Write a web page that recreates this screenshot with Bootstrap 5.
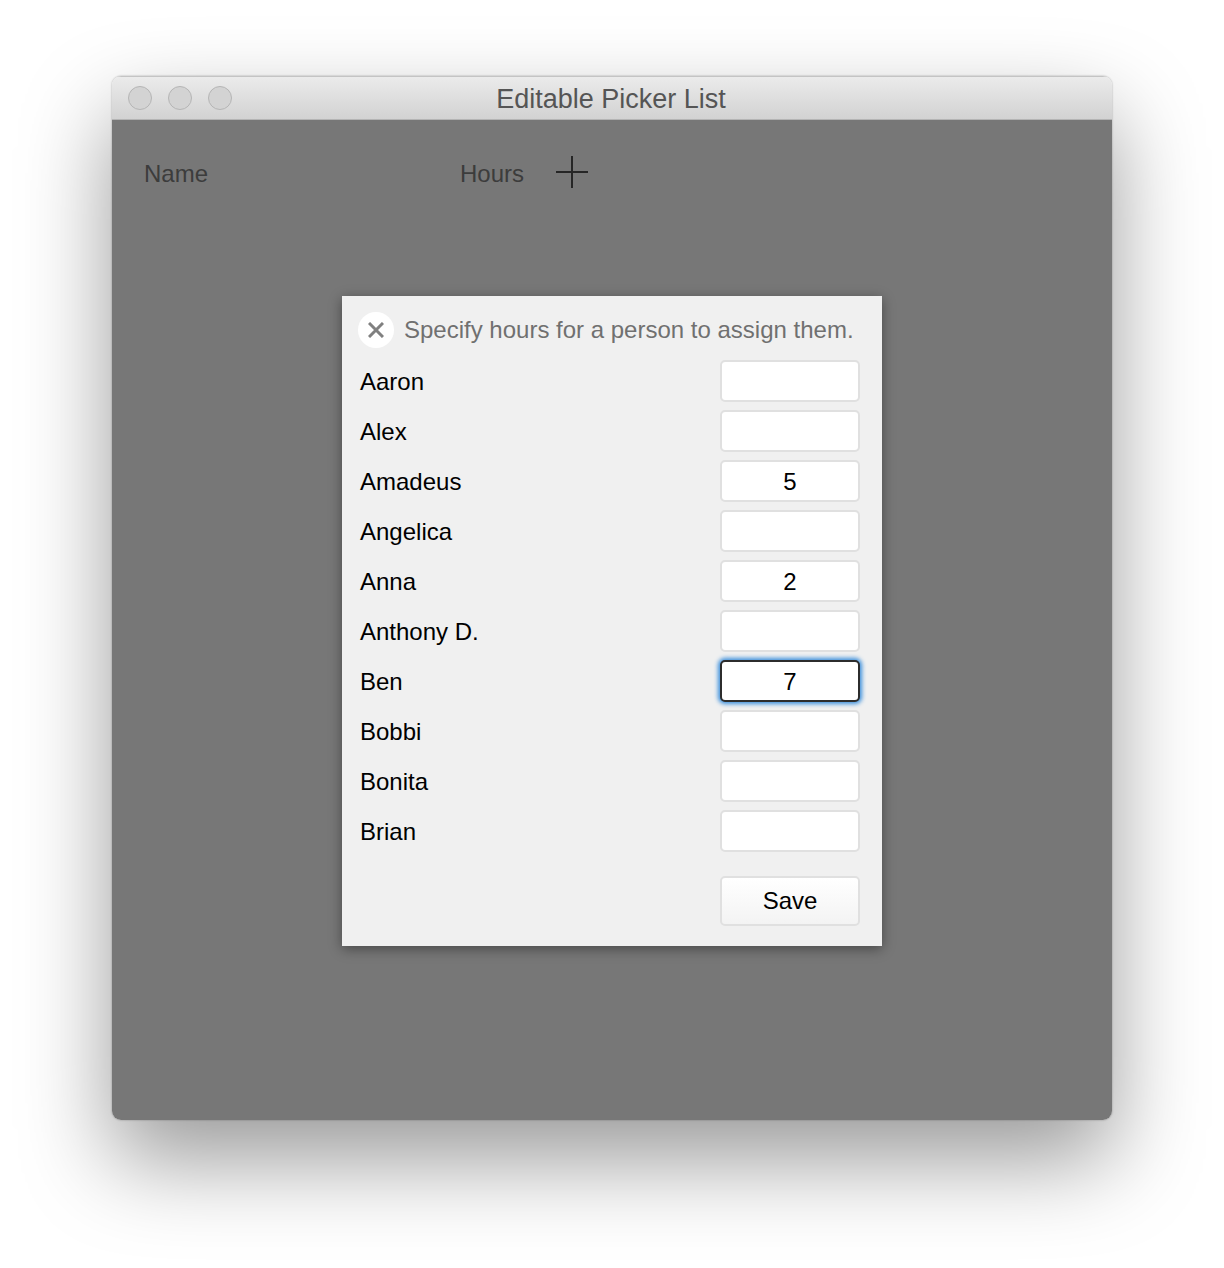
<!DOCTYPE html>
<html lang="en">
<head>
    <meta charset="UTF-8">
    <meta name="viewport" content="width=device-width, initial-scale=1.0">
    <title>Editable Picker List</title>
    <link href="https://cdn.jsdelivr.net/npm/bootstrap@5.3.0/dist/css/bootstrap.min.css" rel="stylesheet">
    <style>
        html, body {
            height: 100%;
        }
        body {
            background: #fff;
            font-family: "Liberation Sans", Arial, sans-serif;
            padding: 76px 112px 148px;
            overflow: hidden;
        }
        .mac-window {
            height: 1044px;
            border-radius: 9px;
            box-shadow: 0 0 2px rgba(0, 0, 0, .35), 0 40px 90px rgba(0, 0, 0, .4);
            overflow: hidden;
        }
        .mac-titlebar {
            height: 44px;
            padding: 0 16px;
            background: linear-gradient(#ebebeb, #d2d2d2);
            border-top: 1px solid #c4c4c4;
            border-bottom: 1px solid #b4b4b4;
            color: #555;
        }
        .mac-light {
            width: 24px;
            height: 24px;
            border-radius: 50%;
            background: #d3d3d3;
            border: 1px solid #b5b5b5;
        }
        .mac-lights {
            gap: 16px;
        }
        .mac-title {
            font-size: 27px;
            line-height: 44px;
            padding-right: 2px;
        }
        .mac-body {
            height: 1000px;
            background: #777;
        }
        .head-row {
            padding: 35px 32px 0;
            color: #3c3c3c;
            font-size: 24px;
            line-height: 34px;
        }
        .head-name {
            width: 316px;
        }
        .head-name, .head-hours {
            padding-top: 2px;
        }
        .head-plus {
            margin: 0 0 2px 32px;
        }
        .picker-dialog {
            top: 176px;
            left: 230px;
            width: 540px;
            height: 650px;
            background: #f0f0f0;
            padding: 9px 22px 0 18px;
            box-shadow: 0 3px 12px rgba(0, 0, 0, .4);
        }
        .picker-hint {
            height: 50px;
            margin: 0 0 1px -2px;
            color: #707070;
            font-size: 24px;
            gap: 10px;
        }
        .close-disc {
            width: 36px;
            height: 36px;
            background: #fff;
        }
        .picker-row {
            height: 50px;
            font-size: 24px;
            color: #000;
        }
        .picker-row span {
            padding-top: 2px;
        }
        .picker-row .form-control {
            width: 140px;
            height: 42px;
            padding: 2px 0 0;
            border: 2px solid #e0e0e0;
            border-radius: 5px;
            box-shadow: none;
            color: #000;
            font-size: 24px;
            text-align: center;
        }
        .picker-row .hours-active {
            border-color: #2c2c2c;
            box-shadow: 0 0 4px 2px #3b8fdc;
        }
        .save-btn {
            width: 140px;
            height: 50px;
            margin-top: 20px;
            padding: 0;
            border: 2px solid #e0e0e0;
            border-radius: 5px;
            background: linear-gradient(#fff, #f3f3f3);
            color: #000;
            font-size: 24px;
        }
    </style>
</head>
<body>

<div class="mac-window">
    <div class="mac-titlebar position-relative d-flex align-items-center">
        <div class="mac-lights d-flex">
            <span class="mac-light"></span>
            <span class="mac-light"></span>
            <span class="mac-light"></span>
        </div>
        <div class="mac-title position-absolute top-0 start-0 w-100 text-center">Editable Picker List</div>
    </div>

    <div class="mac-body position-relative">
        <!-- Header row -->
        <div class="head-row d-flex align-items-center">
            <div class="head-name">Name</div>
            <div class="head-hours">Hours</div>
            <svg class="head-plus" width="32" height="32" viewBox="0 0 32 32">
                <path d="M0 16H32M16 0V32" stroke="#262626" stroke-width="2" fill="none"/>
            </svg>
        </div>

        <!-- Picker popup -->
        <div class="picker-dialog position-absolute">
            <div class="picker-hint d-flex align-items-center">
                <span class="close-disc rounded-circle d-flex align-items-center justify-content-center">
                    <svg width="16" height="16" viewBox="0 0 16 16">
                        <path d="M1 1L15 15M15 1L1 15" stroke="#808080" stroke-width="3" fill="none"/>
                    </svg>
                </span>
                <span>Specify hours for a person to assign them.</span>
            </div>

            <div id="rows"></div>

            <div class="d-flex justify-content-end">
                <button type="button" class="btn save-btn">Save</button>
            </div>
        </div>
    </div>
</div>

<script>
    let people = [
        ['Aaron', ''], ['Alex', ''], ['Amadeus', '5'], ['Angelica', ''], ['Anna', '2'],
        ['Anthony D.', ''], ['Ben', '7'], ['Bobbi', ''], ['Bonita', ''], ['Brian', '']
    ];

    let rowsHTML = '';
    people.forEach(person => {
        let active = person[0] === 'Ben' ? ' hours-active' : '';
        rowsHTML += `
            <div class="picker-row d-flex align-items-center justify-content-between">
                <span>${person[0]}</span>
                <input type="text" class="form-control${active}" value="${person[1]}" aria-label="Hours for ${person[0]}">
            </div>
        `;
    });
    document.getElementById('rows').innerHTML = rowsHTML;
</script>

<script src="https://cdn.jsdelivr.net/npm/bootstrap@5.3.0/dist/js/bootstrap.bundle.min.js"></script>
</body>
</html>
